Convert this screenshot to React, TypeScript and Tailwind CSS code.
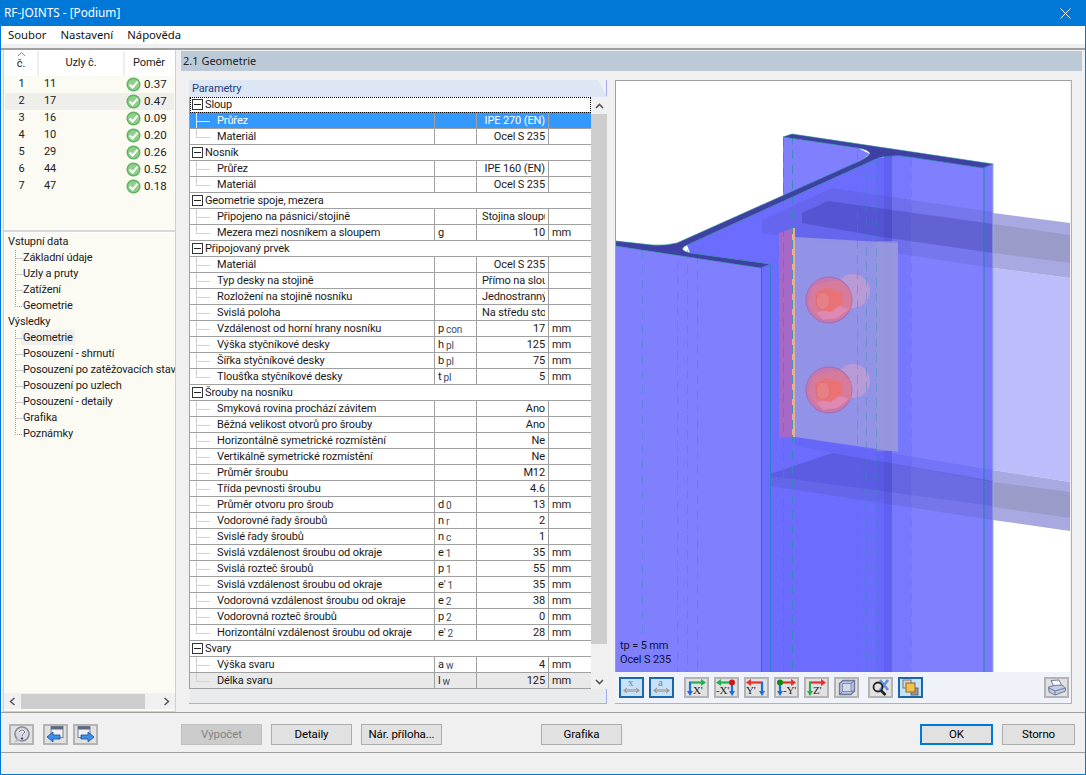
import React from "react";

type Row = { g?: string; n?: string; s?: string; sub?: string; v?: string; u?: string; clip?: boolean; sel?: boolean; last?: boolean; end?: boolean };

const rows: Row[] = [
  { g: "Sloup" },
  { n: "Průřez", v: "IPE 270 (EN)", sel: true },
  { n: "Materiál", v: "Ocel S 235", end: true },
  { g: "Nosník" },
  { n: "Průřez", v: "IPE 160 (EN)" },
  { n: "Materiál", v: "Ocel S 235", end: true },
  { g: "Geometrie spoje, mezera" },
  { n: "Připojeno na pásnici/stojině", v: "Stojina sloupu", clip: true },
  { n: "Mezera mezi nosníkem a sloupem", s: "g", v: "10", u: "mm", end: true },
  { g: "Připojovaný prvek" },
  { n: "Materiál", v: "Ocel S 235" },
  { n: "Typ desky na stojině", v: "Přímo na sloupu", clip: true },
  { n: "Rozložení na stojině nosníku", v: "Jednostranný", clip: true },
  { n: "Svislá poloha", v: "Na středu stojiny", clip: true },
  { n: "Vzdálenost od horní hrany nosníku", s: "p", sub: "con", v: "17", u: "mm" },
  { n: "Výška styčníkové desky", s: "h", sub: "pl", v: "125", u: "mm" },
  { n: "Šířka styčníkové desky", s: "b", sub: "pl", v: "75", u: "mm" },
  { n: "Tloušťka styčníkové desky", s: "t", sub: "pl", v: "5", u: "mm", end: true },
  { g: "Šrouby na nosníku" },
  { n: "Smyková rovina prochází závitem", v: "Ano" },
  { n: "Běžná velikost otvorů pro šrouby", v: "Ano" },
  { n: "Horizontálně symetrické rozmístění", v: "Ne" },
  { n: "Vertikálně symetrické rozmístění", v: "Ne" },
  { n: "Průměr šroubu", v: "M12" },
  { n: "Třída pevnosti šroubu", v: "4.6" },
  { n: "Průměr otvoru pro šroub", s: "d", sub: "0", v: "13", u: "mm" },
  { n: "Vodorovné řady šroubů", s: "n", sub: "r", v: "2" },
  { n: "Svislé řady šroubů", s: "n", sub: "c", v: "1" },
  { n: "Svislá vzdálenost šroubu od okraje", s: "e", sub: "1", v: "35", u: "mm" },
  { n: "Svislá rozteč šroubů", s: "p", sub: "1", v: "55", u: "mm" },
  { n: "Svislá vzdálenost šroubu od okraje", s: "e'", sub: "1", v: "35", u: "mm" },
  { n: "Vodorovná vzdálenost šroubu od okraje", s: "e", sub: "2", v: "38", u: "mm" },
  { n: "Vodorovná rozteč šroubů", s: "p", sub: "2", v: "0", u: "mm" },
  { n: "Horizontální vzdálenost šroubu od okraje", s: "e'", sub: "2", v: "28", u: "mm", end: true },
  { g: "Svary" },
  { n: "Výška svaru", s: "a", sub: "w", v: "4", u: "mm" },
  { n: "Délka svaru", s: "l", sub: "w", v: "125", u: "mm", end: true, last: true },
];

const list = [
  ["1", "11", "0.37"], ["2", "17", "0.47"], ["3", "16", "0.09"], ["4", "10", "0.20"],
  ["5", "29", "0.26"], ["6", "44", "0.52"], ["7", "47", "0.18"],
];

const tree: [string, boolean, boolean?][] = [
  ["Vstupní data", false], ["Základní údaje", true], ["Uzly a pruty", true], ["Zatížení", true], ["Geometrie", true],
  ["Výsledky", false], ["Geometrie", true, true], ["Posouzení - shrnutí", true], ["Posouzení po zatěžovacích stavech", true],
  ["Posouzení po uzlech", true], ["Posouzení - detaily", true], ["Grafika", true], ["Poznámky", true],
];

function Check() {
  return (
    <svg width="15" height="15" viewBox="0 0 15 15" className="shrink-0">
      <circle cx="7.5" cy="7.5" r="7" fill="#5fb35f" />
      <circle cx="7.5" cy="7.5" r="5.6" fill="#8fcf8a" />
      <path d="M3.8 7.4 L6.6 10.4 L11.6 4.6" stroke="#fff" strokeWidth="2.2" fill="none" />
    </svg>
  );
}

function Drawing() {
  const dashes: [number, number][] = [
    [643, 250], [678, 246], [688, 250], [698, 255], [784, 138], [793, 135], [858, 150], [867, 157], [877, 158], [912, 158],
  ];
  const section =
    "M617 241 L653 245 Q666 246 678 243 L861 161 Q872 155 871 153 Q868 149 859 148 L784 137 L793 134 L994 164 L984 168 L911 157 Q900 155 893 156 Q885 156 879 158 L688 245 Q682 248 684 250 Q686 252 691 253 L771 264 L762 268 L617 246 Z";
  const Bolt = ({ y }: { y: number }) => (
    <g>
      <circle cx="854" cy={y - 9} r="17" fill="#b89ad6" />
      <circle cx="830" cy={y} r="23" fill="#c478b0" stroke="#a868b0" strokeWidth="1" />
      <path d={`M815 ${y - 15} L840 ${y - 20} L853 ${y - 8} L852 ${y + 9} L838 ${y + 19} L818 ${y + 17} L809 ${y + 3} Z`} fill="#e07c94" opacity="0.7" />
      <path d={`M818 ${y + 13} L836 ${y + 5} L850 ${y + 9} L838 ${y + 18} L824 ${y + 20} Z`} fill="#e08cb8" opacity="0.8" />
      <path d={`M816 ${y - 6} L826 ${y - 12} L842 ${y - 8} L844 ${y + 3} L832 ${y + 12} L818 ${y + 9} Z`} fill="#ea7274" />
      <ellipse cx="824" cy={y + 1} rx="7" ry="9" fill="#e68084" stroke="#d86a78" strokeWidth="0.8" />
    </g>
  );
  return (
    <svg viewBox="617 81 454 591" width="454" height="591" className="block">
      <rect x="617" y="81" width="454" height="591" fill="#fff" />
      <polygon points="994,268 1071,278 1071,482 994,470" fill="#bdbdfb" />
      <polygon points="994,213 1071,223 1071,278 994,268" fill="#a9a9e2" />
      <polygon points="994,224 1071,235 1071,263 994,253" fill="#9b9bc9" />
      <polygon points="994,470 1071,482 1071,531 994,520" fill="#a9a9e2" />
      <polygon points="994,482 1071,492 1071,518 994,507" fill="#9b9bc9" />
      <polygon points="784,137 859,148 871,154 861,161 784,199" fill="#8080ff" />
      <path d="M688 245 L879 158 Q893 155 911 157 L984 168 L994 164 L994 672 L771 672 L771 264 L691 253 Z" fill="#6c6cff" />
      <polygon points="912,157 984,168 984,672 912,672" fill="#8080ff" />
      <rect x="893" y="156" width="19" height="516" fill="#7878ff" />
      <rect x="877" y="158" width="8" height="514" fill="#6868ff" />
      <rect x="885" y="156" width="8" height="516" fill="#6060f2" />
      <polygon points="984,168 994,164 994,672 984,672" fill="#7a7aff" />
      <polygon points="617,246 762,268 762,672 617,672" fill="#8080ff" />
      <polygon points="762,268 771,264 771,672 762,672" fill="#6c6cff" />
      <polygon points="763,220 833,188 994,212 994,268 763,233" fill="#46468c" opacity="0.16" />
      <polygon points="803,213 829,201 994,224 994,253 883,237 803,223" fill="#303090" opacity="0.28" />
      <polygon points="796,237 899,243 899,452 796,437" fill="#9696e4" opacity="0.92" />
      <rect x="877" y="241" width="22" height="210" fill="#9a9ad8" opacity="0.5" />
      <polygon points="780,233 794,228 794,437 780,438" fill="#a868c8" />
      <rect x="793" y="228" width="3" height="209" fill="#e4b090" />
      <Bolt y={300} />
      <Bolt y={390} />
      <polygon points="796,437 994,470 994,482 796,446" fill="#5858e8" opacity="0.3" />
      <polygon points="771,474 833,453 994,481 994,506 771,476" fill="#303090" opacity="0.26" />
      <polygon points="771,476 994,506 994,520 771,486" fill="#46468c" opacity="0.18" />
      {dashes.map(([x, y]) => (
        <line key={x} x1={x + 0.5} x2={x + 0.5} y1={y} y2="672" stroke="#2f8fb0" strokeWidth="1" strokeDasharray="9 6" opacity={x === 784 || x === 793 ? 0.85 : 0.4} />
      ))}
      <line x1="762.5" x2="762.5" y1="268" y2="672" stroke="#0c8f88" />
      <line x1="771.5" x2="771.5" y1="264" y2="672" stroke="#2c80c8" />
      <line x1="985" x2="985" y1="168" y2="672" stroke="#0c8f98" opacity="0.8" />
      <line x1="994" x2="994" y1="164" y2="672" stroke="#9ab4c8" />
      <path d={section} fill="#3f3fa5" stroke="#1b8b8b" strokeWidth="0.6" />
    </svg>
  );
}

function Btn({ children, on, w = 25 }: { children?: React.ReactNode; on?: boolean; w?: number }) {
  return (
    <div
      style={{ width: w }}
      className={`h-[21px] flex items-center justify-center ${on ? "border-2 border-[#1a66a6] bg-[#c6e2f8]" : "border-2 border-[#b4b4b4] bg-[#e1e1e1]"}`}
    >
      {children}
    </div>
  );
}

function DimIcon({ t }: { t: string }) {
  return (
    <div className="relative w-[19px] h-[17px]">
      <span className="absolute left-[6px] -top-[3px] text-[11px] leading-[13px] text-[#808080] font-['Liberation_Serif',serif]">{t}</span>
      <svg width="19" height="17" viewBox="0 0 19 17" className="absolute left-0 top-0">
        <path d="M1 11.5L5 8.5V14.5Z M18 11.5L14 8.5V14.5Z" fill="#9a9a9a" />
        <rect x="4" y="10" width="11" height="3" fill="#b4b4b4" />
      </svg>
    </div>
  );
}

function AxisIcon({ label, h, v, vx, dir, dot }: { label: string; h: string; v: string; vx: number; dir: "l" | "r"; dot?: string }) {
  return (
    <div className="relative w-[21px] h-[17px]">
      <svg width="21" height="17" viewBox="0 0 21 17" className="absolute left-0 top-0">
        <path d="M3 3.5H17" stroke={h} strokeWidth="2.2" />
        {dir === "r" ? <path d="M15 0L20 3.5L15 7Z" fill={h} /> : <path d="M5 0L0 3.5L5 7Z" fill={h} />}
        <path d={`M${vx} 3V13`} stroke={v} strokeWidth="2.2" />
        <path d={`M${vx - 3} 12L${vx} 17L${vx + 3} 12Z`} fill={v} />
        {dot && <circle cx={vx} cy="3.5" r="3" fill={dot} />}
      </svg>
      <span className={`absolute top-[5px] text-[11px] leading-[12px] text-[#222] font-['Liberation_Serif',serif] ${vx < 10 ? "left-[7px]" : "left-[0px]"}`}>{label}</span>
    </div>
  );
}

function Cell({ r }: { r: Row }) {
  const txt = r.sel ? "text-white" : "text-[#1a1a1a]";
  return (
    <div className={`flex h-[16px] border-b border-[#a0a0a0] ${r.sel ? "bg-[#3399ff]" : r.last ? "bg-[#e9e9e9]" : "bg-white"} ${txt}`}>
      <div className="relative w-[245px] shrink-0 border-r border-[#a0a0a0] pl-[27px] leading-[15px] whitespace-nowrap overflow-hidden">
        <svg width="20" height="16" className="absolute left-[6px] top-0">
          <path d={r.end ? "M0.5 0V8.5H14" : "M0.5 0V16M0.5 8.5H14"} stroke={r.sel ? "#dbeaff" : "#d0d0d0"} fill="none" />
        </svg>
        {r.n}
      </div>
      <div className="w-[42px] shrink-0 border-r border-[#a0a0a0] pl-[3px] leading-[15px] whitespace-nowrap">
        {r.s}
        {r.sub && <span className="relative top-[1px] ml-[2px] text-[10px] text-[#3a4a6a]">{r.sub}</span>}
      </div>
      <div className={`w-[72px] shrink-0 border-r border-[#a0a0a0] leading-[15px] whitespace-nowrap overflow-hidden pr-[3px] ${r.clip ? "pl-[5px]" : "text-right"}`}>
        <div className="overflow-hidden">{r.v}</div>
      </div>
      <div className="flex-1 pl-[3px] leading-[15px]">{r.u}</div>
    </div>
  );
}

function GroupCell({ r, first }: { r: Row; first?: boolean }) {
  return (
    <div className={`relative flex items-center h-[16px] bg-white border-b border-[#a0a0a0] text-[#1a1a1a] ${first ? "outline-1 outline-dotted outline-black -outline-offset-1" : ""}`}>
      <div className="w-[11px] h-[11px] ml-[2px] mr-[2px] border border-[#333] flex items-center justify-center shrink-0">
        <div className="w-[7px] h-[1px] bg-[#222]" />
      </div>
      <span className="leading-[15px] whitespace-nowrap">{r.g}</span>
    </div>
  );
}

const WinBtn = ({ t, w, dis, def }: { t: string; w: number; dis?: boolean; def?: boolean }) => (
  <div
    style={{ width: w }}
    className={`h-[21px] flex items-center justify-center text-[11.5px] ${
      def ? "border-2 border-[#0078d7] bg-[#e1e1e1] text-black" : dis ? "border border-[#bfbfbf] bg-[#cccccc] text-[#838383]" : "border border-[#adadad] bg-[#e1e1e1] text-black"
    }`}
  >
    {t}
  </div>
);

export default function App() {
  return (
    <div className="w-[1086px] h-[775px] border border-[#0078d7] border-t-0 bg-[#f0f0f0] flex flex-col overflow-hidden font-['Roboto',sans-serif] text-[11px] tracking-[-0.12px]">
      <div className="h-[26px] shrink-0 bg-[#0078d7] flex items-center justify-between pl-[3px] pr-[15px] -mx-[1px] tracking-normal">
        <span className="text-white text-[11.8px] font-['Noto_Sans',sans-serif] pl-[1px]">RF-JOINTS - [Podium]</span>
        <svg width="11" height="11" viewBox="0 0 11 11"><path d="M0.5 0.5L10.5 10.5M10.5 0.5L0.5 10.5" stroke="#fff" strokeWidth="1" /></svg>
      </div>
      <div className="h-[18px] shrink-0 bg-white flex items-center pl-[7px] gap-[14px] text-[11.3px] text-[#111] font-['Noto_Sans',sans-serif] tracking-normal">
        <span>Soubor</span>
        <span>Nastavení</span>
        <span>Nápověda</span>
      </div>
      <div className="h-[4px] shrink-0 bg-[#f0f0f0]" />
      <div className="h-[665px] shrink-0 flex border-y-2 border-t-[#a0a0a0] border-b-[#a0a0a0] border-b-[1px] pl-[2px] pr-[2px]">
        <div className="w-[173px] shrink-0 flex flex-col border border-[#d0d0d0] border-t-0 bg-[#fbfbf3]">
          <div className="h-[180px] shrink-0 flex flex-col pl-[1px]">
            <div className="h-[26px] flex bg-white text-[#222] border-t border-white">
              <div className="relative w-[34px] border-r-2 border-[#eeeeee] flex items-end justify-center pb-[4px]">
                <svg width="7" height="4" className="absolute top-[1px] left-[13px]"><path d="M0 4L3.5 0.5L7 4" stroke="#888" fill="none" /></svg>
                č.
              </div>
              <div className="w-[86px] border-r-2 border-[#eeeeee] flex items-center justify-center">Uzly č.</div>
              <div className="w-[48px] flex items-center justify-center">Poměr</div>
            </div>
            {list.map((l, i) => (
              <div key={l[0]} className={`h-[17px] flex items-center text-[#222] w-[169px] ${i === 1 ? "bg-[#eeeeea]" : ""}`}>
                <div className="w-[33px] text-center">{l[0]}</div>
                <div className="w-[88px] pl-[6px]">{l[1]}</div>
                <Check />
                <span className="ml-[3px] text-[11.5px] tracking-[0.1px]">{l[2]}</span>
              </div>
            ))}
          </div>
          <div className="h-[3px] shrink-0 bg-[#d8d8d8] border-b border-white" />
          <div className="flex-1 overflow-hidden pt-[1px] text-[#1a1a1a]">
            {tree.map(([t, child, hl], i) => (
              <div key={i} className={`relative h-[16px] leading-[16px] whitespace-nowrap ${child ? "pl-[19px]" : "pl-[4px]"}`}>
                {child && (
                  <svg width="8" height="16" className="absolute left-[11px] top-0">
                    <path d={t === "Poznámky" || (t === "Geometrie" && !hl) ? "M0.5 0V8.5H8" : "M0.5 0V16M0.5 8.5H8"} stroke="#999" strokeDasharray="1 1" fill="none" />
                  </svg>
                )}
                <span className={hl ? "bg-[#efefef] py-[1px] px-[2px] -mx-[2px]" : ""}>{t}</span>
              </div>
            ))}
          </div>
          <div className="relative h-[16px] shrink-0 flex items-center justify-between px-[5px] bg-[#f0f0f0] mb-[2px]">
            <svg width="7" height="9"><path d="M5.5 1L1.5 4.5L5.5 8" stroke="#555" strokeWidth="1.5" fill="none" /></svg>
            <div className="absolute left-[17px] w-[124px] h-[15px] bg-[#cdcdcd]" />
            <svg width="7" height="9"><path d="M1.5 1L5.5 4.5L1.5 8" stroke="#555" strokeWidth="1.5" fill="none" /></svg>
          </div>
        </div>
        <div className="flex-1 ml-[5px] flex flex-col min-w-0">
          <div className="h-[20px] shrink-0 mt-[1px] mr-[1px] bg-[#bccad8] flex items-center pl-[2px] text-[11px] text-[#222] font-['Noto_Sans',sans-serif] tracking-normal">2.1 Geometrie</div>
          <div className="flex-1 flex pt-[9px] pl-[8px]">
            <div className="w-[418px] shrink-0 h-[624px] flex flex-col border-r border-b border-[#a9a9ee] relative">
              <div className="h-[17px] shrink-0 bg-[#dce6f4] pl-[3px] leading-[17px] text-[#1f3f7f] [clip-path:polygon(0_0,calc(100%-9px)_0,100%_100%,0_100%)] -mr-[1px]">Parametry</div>
              <div className="flex">
                <div className="w-[402px] shrink-0 border-l border-[#a0a0a0]">
                  {rows.map((r, i) => (r.g ? <GroupCell key={i} r={r} first={i === 0} /> : <Cell key={i} r={r} />))}
                </div>
                <div className="w-[16px] shrink-0 flex flex-col bg-[#f0f0f0]">
                  <div className="h-[17px] flex items-center justify-center shrink-0">
                    <svg width="9" height="6"><path d="M1 5L4.5 1.5L8 5" stroke="#555" strokeWidth="1.6" fill="none" /></svg>
                  </div>
                  <div className="h-[530px] bg-[#cdcdcd] shrink-0" />
                  <div className="flex-1 flex items-end justify-center pb-[4px]">
                    <svg width="9" height="6"><path d="M1 1L4.5 4.5L8 1" stroke="#555" strokeWidth="1.6" fill="none" /></svg>
                  </div>
                </div>
              </div>
              <div className="flex-1 bg-[#e8eced]" />
            </div>
            <div className="ml-[8px] w-[457px] h-[624px] shrink-0 flex flex-col border-r border-b border-[#a9a9ee]">
              <div className="relative border-l border-t border-[#a0a0a0] h-[592px] shrink-0">
                <Drawing />
                <div className="absolute left-[4px] bottom-[5px] text-[11px] leading-[14px] text-[#101030]">
                  <div>tp = 5 mm</div>
                  <div>Ocel S 235</div>
                </div>
              </div>
              <div className="flex-1 bg-[#eff3f9] flex items-center pl-[4px]">
                <Btn on><DimIcon t="x" /></Btn>
                <div className="w-[5px]" />
                <Btn on><DimIcon t="a" /></Btn>
                <div className="w-[10px]" />
                <Btn><AxisIcon label="X'" h="#22b14c" v="#1a6fd8" vx={4} dir="r" /></Btn>
                <div className="w-[5px]" />
                <Btn><AxisIcon label="-X'" h="#22b14c" v="#1a6fd8" vx={16} dir="l" dot="#d01818" /></Btn>
                <div className="w-[5px]" />
                <Btn><AxisIcon label="Y'" h="#e53030" v="#1a6fd8" vx={16} dir="l" /></Btn>
                <div className="w-[5px]" />
                <Btn><AxisIcon label="-Y'" h="#e53030" v="#1a6fd8" vx={4} dir="r" dot="#118811" /></Btn>
                <div className="w-[5px]" />
                <Btn><AxisIcon label="Z'" h="#e53030" v="#22b14c" vx={4} dir="r" /></Btn>
                <div className="w-[5px]" />
                <Btn>
                  <svg width="18" height="17" viewBox="0 0 18 17">
                    <path d="M1.5 4.5L5 1.5H16.5V12L13 15.5H1.5Z" fill="#b8c2dc" stroke="#6a7a9c" strokeWidth="1.4" />
                    <path d="M4.5 4.5H13V12.5H4.5Z" fill="#d4daea" stroke="#8090b0" />
                    <path d="M13 4.5L16.5 1.5M13 12.5L16.5 12M4.5 12.5L1.5 15.5" stroke="#6a7a9c" fill="none" />
                  </svg>
                </Btn>
                <div className="w-[9px]" />
                <Btn>
                  <svg width="20" height="17" viewBox="0 0 20 17">
                    <path d="M9 1L17 11M17 1L9 11" stroke="#5f8fe8" strokeWidth="2.6" />
                    <circle cx="7" cy="8" r="4.5" fill="none" stroke="#222" strokeWidth="1.8" />
                    <path d="M10 11.5L14.5 16" stroke="#222" strokeWidth="2.6" />
                  </svg>
                </Btn>
                <div className="w-[5px]" />
                <Btn on>
                  <svg width="17" height="17" viewBox="0 0 17 17">
                    <rect x="1" y="1" width="8" height="8" fill="#d4d4d4" stroke="#777" />
                    <rect x="9" y="9" width="7" height="7" fill="#999" stroke="#666" />
                    <rect x="4" y="4" width="9" height="9" fill="#f2c050" stroke="#8a6a20" />
                  </svg>
                </Btn>
                <div className="flex-1" />
                <Btn>
                  <svg width="20" height="17" viewBox="0 0 20 17">
                    <path d="M4 1.5L12 1L15 7L7 8Z" fill="#fff" stroke="#6a7aa0" />
                    <path d="M1.5 8L7 6.5L15 6L18.5 9V12L8 16L2 13Z" fill="#c4cce4" stroke="#6a7aa0" />
                    <path d="M2 9L8 12L18.5 9M8 12V16" stroke="#6a7aa0" fill="none" />
                  </svg>
                </Btn>
                <div className="w-[2px]" />
              </div>
            </div>
          </div>
        </div>
      </div>
      <div className="h-[40px] shrink-0 flex items-center border-b border-[#a0a0a0] pl-[8px] pt-[4px]">
        <Btn>
          <svg width="19" height="17" viewBox="0 0 19 17">
            <circle cx="10" cy="8" r="7" fill="#d8d8e0" stroke="#8a8a9a" strokeWidth="1.6" />
            <path d="M7.5 6C8 3.5 12.5 3.5 12.5 6C12.5 8 10 8 10 10" stroke="#fff" strokeWidth="2" fill="none" />
            <path d="M7.5 6C8 3.5 12.5 3.5 12.5 6C12.5 8 10 8 10 10" stroke="#555a70" strokeWidth="1" fill="none" />
            <circle cx="10" cy="12.5" r="1.2" fill="#555a70" />
            <path d="M5 12L2.5 16.5L8.5 14.5Z" fill="#b8b8c4" />
          </svg>
        </Btn>
        <div className="w-[9px]" />
        <Btn>
          <svg width="19" height="17" viewBox="0 0 19 17">
            <rect x="5" y="0.5" width="12" height="11" fill="#eef2f8" stroke="#7a8090" />
            <rect x="5" y="0.5" width="12" height="3" fill="#5a6a80" />
            <path d="M1 11L7 6V9H14V13H7V16Z" fill="#3f8fe8" stroke="#1a4a9a" strokeWidth="0.8" />
          </svg>
        </Btn>
        <div className="w-[5px]" />
        <Btn>
          <svg width="19" height="17" viewBox="0 0 19 17">
            <rect x="2" y="0.5" width="12" height="11" fill="#eef2f8" stroke="#7a8090" />
            <rect x="2" y="0.5" width="12" height="3" fill="#5a6a80" />
            <path d="M18 11L12 6V9H5V13H12V16Z" fill="#3f8fe8" stroke="#1a4a9a" strokeWidth="0.8" />
          </svg>
        </Btn>
        <div className="w-[83px]" />
        <WinBtn t="Výpočet" w={81} dis />
        <div className="w-[9px]" />
        <WinBtn t="Detaily" w={81} />
        <div className="w-[9px]" />
        <WinBtn t="Nár. příloha..." w={81} />
        <div className="w-[99px]" />
        <WinBtn t="Grafika" w={81} />
        <div className="w-[298px]" />
        <WinBtn t="OK" w={73} def />
        <div className="w-[9px]" />
        <WinBtn t="Storno" w={73} />
      </div>
      <div className="flex-1" />
    </div>
  );
}
